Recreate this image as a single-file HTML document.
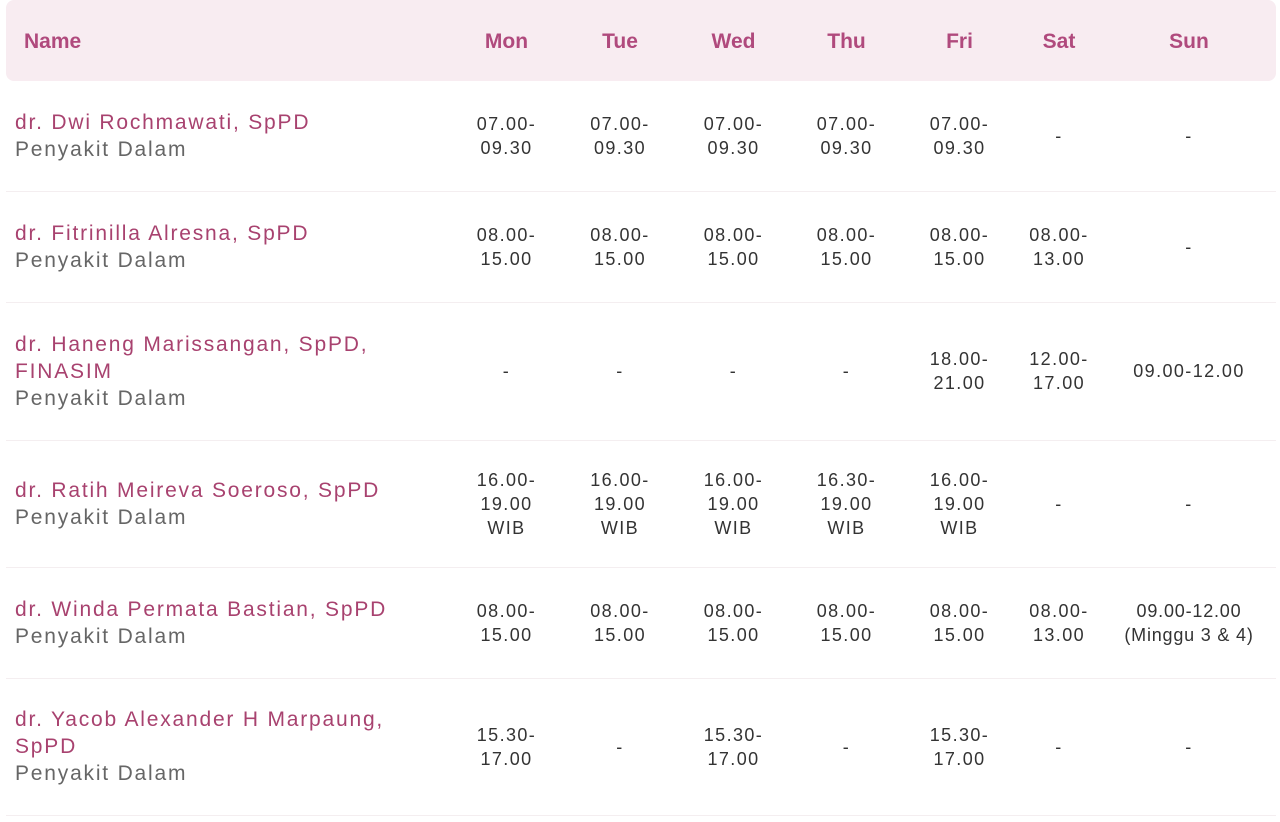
<!DOCTYPE html>
<html><head><meta charset="utf-8"><style>
body{margin:0;background:#fff;width:1280px;height:822px;overflow:hidden;font-family:"Liberation Sans",sans-serif;}
table{position:absolute;left:6px;top:0;border-collapse:collapse;table-layout:fixed;width:1270px;}
th{background:#f8ecf1;color:#b04a7d;font-size:21px;font-weight:bold;height:78px;text-align:center;padding:3px 0 0 0;}
th:first-child{text-align:left;padding-left:18px;border-radius:8px 0 0 8px;}
th:last-child{border-radius:0 8px 8px 0;}
td{text-align:center;vertical-align:middle;font-size:18px;color:#333;line-height:24px;letter-spacing:1.4px;padding:0;border-bottom:1px solid #f4eef0;}
td.n{text-align:left;padding-left:9px;letter-spacing:1.8px;line-height:27px;font-size:21px;}
.d{color:#a8426f;}
.s{color:#666;}
</style></head><body>
<table>
<colgroup><col style="width:444px"><col style="width:113px"><col style="width:114px"><col style="width:113px"><col style="width:113px"><col style="width:113px"><col style="width:86px"><col style="width:174px"></colgroup>
<tr><th>Name</th><th>Mon</th><th>Tue</th><th>Wed</th><th>Thu</th><th>Fri</th><th>Sat</th><th>Sun</th></tr>
<tr style="height:110px"><td class="n"><span class="d">dr. Dwi Rochmawati, SpPD</span><br><span class="s">Penyakit Dalam</span></td><td>07.00-<br>09.30</td><td>07.00-<br>09.30</td><td>07.00-<br>09.30</td><td>07.00-<br>09.30</td><td>07.00-<br>09.30</td><td>-</td><td>-</td></tr>
<tr style="height:111px"><td class="n"><span class="d">dr. Fitrinilla Alresna, SpPD</span><br><span class="s">Penyakit Dalam</span></td><td>08.00-<br>15.00</td><td>08.00-<br>15.00</td><td>08.00-<br>15.00</td><td>08.00-<br>15.00</td><td>08.00-<br>15.00</td><td>08.00-<br>13.00</td><td>-</td></tr>
<tr style="height:138px"><td class="n"><span class="d">dr. Haneng Marissangan, SpPD,<br>FINASIM</span><br><span class="s">Penyakit Dalam</span></td><td>-</td><td>-</td><td>-</td><td>-</td><td>18.00-<br>21.00</td><td>12.00-<br>17.00</td><td>09.00-12.00</td></tr>
<tr style="height:127px"><td class="n"><span class="d">dr. Ratih Meireva Soeroso, SpPD</span><br><span class="s">Penyakit Dalam</span></td><td>16.00-<br>19.00<br>WIB</td><td>16.00-<br>19.00<br>WIB</td><td>16.00-<br>19.00<br>WIB</td><td>16.30-<br>19.00<br>WIB</td><td>16.00-<br>19.00<br>WIB</td><td>-</td><td>-</td></tr>
<tr style="height:111px"><td class="n"><span class="d">dr. Winda Permata Bastian, SpPD</span><br><span class="s">Penyakit Dalam</span></td><td>08.00-<br>15.00</td><td>08.00-<br>15.00</td><td>08.00-<br>15.00</td><td>08.00-<br>15.00</td><td>08.00-<br>15.00</td><td>08.00-<br>13.00</td><td style="letter-spacing:0.8px">09.00-12.00<br>(Minggu 3 &amp; 4)</td></tr>
<tr style="height:137px"><td class="n"><span class="d">dr. Yacob Alexander H Marpaung,<br>SpPD</span><br><span class="s">Penyakit Dalam</span></td><td>15.30-<br>17.00</td><td>-</td><td>15.30-<br>17.00</td><td>-</td><td>15.30-<br>17.00</td><td>-</td><td>-</td></tr>
</table>
</body></html>
